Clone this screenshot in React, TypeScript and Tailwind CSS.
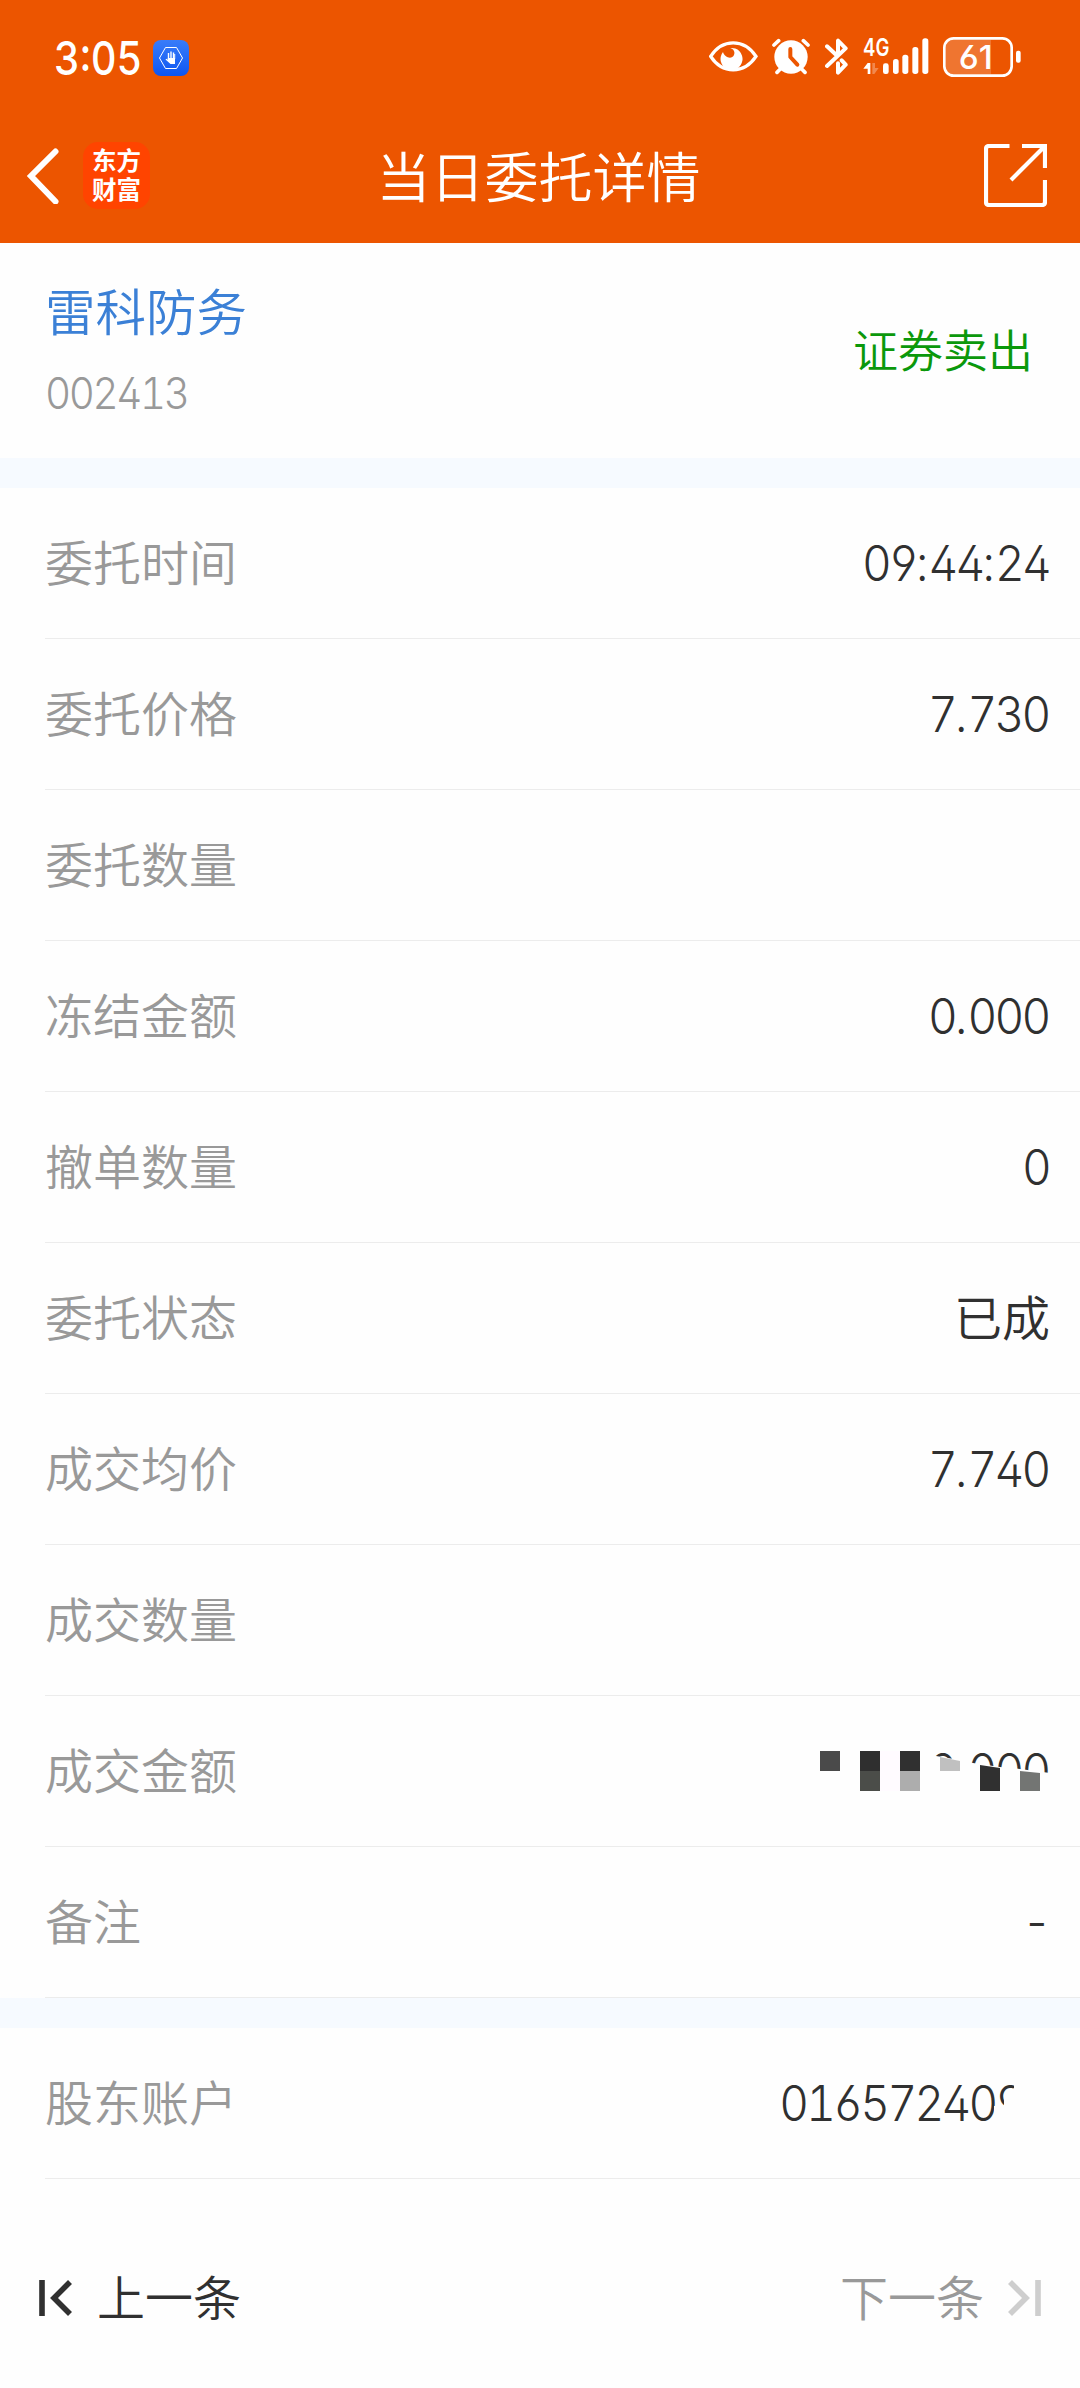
import React from "react";
import clsx from "clsx";

type Row = {
  label: string;
  value?: string;
  kind?: "number" | "text" | "masked" | "account";
};

const orderRows: Row[] = [
  { label: "委托时间", value: "09:44:24" },
  { label: "委托价格", value: "7.730" },
  { label: "委托数量" },
  { label: "冻结金额", value: "0.000" },
  { label: "撤单数量", value: "0" },
  { label: "委托状态", value: "已成", kind: "text" },
  { label: "成交均价", value: "7.740" },
  { label: "成交数量" },
  { label: "成交金额", value: "0.000", kind: "masked" },
  { label: "备注", value: "-" },
];

const digitFont =
  "inline-block whitespace-nowrap font-['Inter',sans-serif] [font-feature-settings:'tnum','cv02','cv03','cv04']";

// digits are set tight, separators keep their own width
function Digits({ value, className }: { value: string; className?: string }) {
  return (
    <span className={clsx(digitFont, className)}>
      {value.split(/([.:])/).map((part, index) => (
        <span
          key={index}
          className={/[.:]/.test(part) ? "tracking-normal" : "tracking-[-0.06em]"}
        >
          {part}
        </span>
      ))}
    </span>
  );
}

function EyeIcon() {
  return (
    <svg width="49" height="33" viewBox="0 0 147 99" fill="none">
      <path
        d="M5 49C40 -5 105 -5 141 49C105 103 40 103 5 49Z"
        stroke="white"
        strokeWidth="10"
      />
      <path
        d="M64 24A33 33 0 1 1 42 36C46 52 68 60 75 45C79 34 73 27 64 24Z"
        fill="white"
      />
    </svg>
  );
}

function AlarmIcon() {
  return (
    <svg width="38" height="37" viewBox="0 0 114 111" fill="none">
      <path
        d="M6 21L20 8M94 8L108 21M15 103L25 93M99 103L89 93"
        stroke="white"
        strokeWidth="11"
        strokeLinecap="round"
      />
      <circle cx="57" cy="57" r="50" fill="white" />
      <path
        d="M55 33V57L76 80"
        stroke="#ec5500"
        strokeWidth="12"
        strokeLinecap="round"
        strokeLinejoin="round"
      />
    </svg>
  );
}

function BluetoothIcon() {
  return (
    <svg width="23" height="37" viewBox="0 0 69 111" fill="none">
      <path
        d="M6 84L62 31L39 8V44M6 25L34 51M50 67L62 80L39 104V76"
        stroke="white"
        strokeWidth="12"
        strokeLinecap="round"
        strokeLinejoin="round"
      />
    </svg>
  );
}

function SignalIcon() {
  return (
    <svg
      className="overflow-visible"
      width="66"
      height="37"
      viewBox="0 0 198 111"
    >
      <text
        x="0"
        y="54"
        fontSize="71"
        fontWeight="600"
        textLength="79"
        lengthAdjust="spacingAndGlyphs"
        fill="white"
        className="font-['Inter',sans-serif]"
      >
        4G
      </text>
      <path d="M1 92L14 75H22V108H14V92Z" fill="white" />
      <path d="M28 75H36V90H47L34 108H28Z" fill="white" opacity="0.3" />
      <rect x="60" y="76" width="17" height="32" rx="7" fill="white" />
      <rect x="90" y="63" width="17" height="45" rx="8" fill="white" />
      <rect x="118" y="50" width="18" height="58" rx="8" fill="white" />
      <rect x="148" y="27" width="18" height="81" rx="8" fill="white" />
      <rect x="178" y="1" width="18" height="107" rx="8" fill="white" />
    </svg>
  );
}

function BatteryIcon() {
  return (
    <svg width="78" height="40" viewBox="0 0 234 120" fill="none">
      <path
        d="M32 8H144V112H32Q8 112 8 88V32Q8 8 32 8Z"
        fill="white"
        opacity="0.19"
      />
      <rect
        x="4"
        y="4"
        width="202"
        height="112"
        rx="28"
        stroke="white"
        strokeWidth="8"
      />
      <rect x="219" y="41" width="14" height="36" rx="6" fill="white" />
      <text
        x="47"
        y="95"
        fontSize="99"
        fontWeight="500"
        textLength="102"
        lengthAdjust="spacingAndGlyphs"
        fill="white"
        className="font-['Inter',sans-serif] [font-feature-settings:'cv03']"
      >
        61
      </text>
    </svg>
  );
}

function HandBadge() {
  return (
    <div className="flex size-9 items-center justify-center rounded-lg bg-linear-to-b from-[#397cf9] to-[#0c55f2]">
      <svg width="36" height="36" viewBox="0 0 36 36" fill="none">
        <path d="M6.5 18L12.5 7.5H23.5L29.5 18L23.5 28.5H12.5Z" stroke="white" />
        <path
          d="M15.5 13V19M18 11.5V19M20.5 12.5V19"
          stroke="white"
          strokeWidth="1.4"
        />
        <path
          d="M14.8 18H22V24H17.5L12.5 19.5L13.5 18.8L14.8 19.8ZM21.2 14H22.2V19H21.2Z"
          fill="white"
        />
      </svg>
    </div>
  );
}

function StatusBar() {
  return (
    <div className="flex h-[116px] items-center justify-between pr-[59px] pl-[54px]">
      <div className="flex items-center">
        <div className="w-[99px] pt-px">
          <span
            className={clsx(
              digitFont,
              "origin-left scale-x-[0.86] text-[46.5px] leading-none font-medium text-white",
            )}
          >
            3:05
          </span>
        </div>
        <HandBadge />
      </div>
      <div className="flex items-center pb-[3px]">
        <EyeIcon />
        <div className="w-[14px]" />
        <AlarmIcon />
        <div className="w-[15px]" />
        <BluetoothIcon />
        <div className="w-[15px]" />
        <SignalIcon />
        <div className="w-[14px]" />
        <BatteryIcon />
      </div>
    </div>
  );
}

function NavBar() {
  return (
    <div className="grid h-[127px] grid-cols-[1fr_auto_1fr] items-start pr-[33px] pl-[26px]">
      <div className="flex items-center gap-[24px] pt-[26px]">
        <svg width="33" height="56" viewBox="0 0 33 56" fill="none">
          <path
            d="M29.5 3.5L5 28L29.5 53.5"
            stroke="white"
            strokeWidth="6"
            strokeLinecap="round"
          />
        </svg>
        <div className="flex h-[67px] w-[67px] flex-col items-center justify-center rounded-[15px] bg-[#ff4400] pb-1 text-[24.5px] leading-[29px] font-bold text-white">
          <span>东方</span>
          <span>财富</span>
        </div>
      </div>
      <h1 className="pt-[19px] pl-1 text-[54px] leading-[80px] font-[350] text-white">
        当日委托详情
      </h1>
      <svg
        className="mt-7 justify-self-end"
        width="63"
        height="63"
        viewBox="0 0 63 63"
        fill="none"
      >
        <path
          d="M25.5 2H5Q2 2 2 5V58Q2 61 5 61H58Q61 61 61 58V36M38 2H61V24M61 2L27 36"
          stroke="white"
          strokeWidth="4.2"
        />
      </svg>
    </div>
  );
}

function Summary() {
  return (
    <section className="flex h-[215px] items-center justify-between pr-[47px] pl-[45px]">
      <div className="flex flex-col">
        <span className="h-[82px] text-[50.5px] leading-[77px] font-[350] text-[#3b80d6]">
          雷科防务
        </span>
        <Digits
          value="002413"
          className="origin-left scale-x-[0.93] pt-[2px] text-[43.5px] leading-[76px] font-[350] text-[#999]"
        />
      </div>
      <span className="pb-1 text-[45px] leading-[60px] font-[350] text-[#0b980b]">
        证券卖出
      </span>
    </section>
  );
}

// mosaic that hides the lower part of the amount
function Mosaic() {
  return (
    <svg
      className="absolute top-0 right-[30px]"
      width="240"
      height="150"
      viewBox="0 0 240 150"
    >
      <path
        d="M120 59L144 63L163 67L190 71L210 73L240 77V110H120Z"
        fill="#fefefe"
      />
      <rect x="10" y="55" width="20" height="20" fill="#4a4a4a" />
      <rect x="50" y="55" width="20" height="20" fill="#2f2f2f" />
      <rect x="50" y="75" width="20" height="20" fill="#4b4d49" />
      <rect x="70" y="55" width="20" height="40" fill="#fffbff" />
      <rect x="90" y="55" width="20" height="20" fill="#303030" />
      <rect x="90" y="75" width="20" height="20" fill="#adadad" />
      <path d="M130 61L150 65V75H130Z" fill="#c0c0c0" />
      <path d="M170 69L190 72V95H170Z" fill="#303030" />
      <path d="M210 75L230 77V95H210Z" fill="#737573" />
    </svg>
  );
}

function DetailRow({ label, value, kind = "number" }: Row) {
  return (
    <div className="relative ml-[45px] flex h-[151px] items-center justify-between border-b border-[#ececec] pr-[30px]">
      <span className="pb-[6px] text-[48px] leading-[72px] font-[350] text-[#999]">
        {label}
      </span>
      {value && kind === "text" && (
        <span className="pb-[6px] text-[48px] leading-[72px] font-[350] text-[#303030]">
          {value}
        </span>
      )}
      {value && kind !== "text" && (
        <Digits
          value={value}
          className={clsx(
            "origin-right scale-x-[0.93] text-[49.5px] leading-[72px] font-[350] text-[#303030]",
            kind === "account" ? "mr-[28px]" : "mr-px",
          )}
        />
      )}
      {kind === "masked" && <Mosaic />}
      {kind === "account" && (
        <svg
          className="absolute top-0 right-0"
          width="100"
          height="150"
          viewBox="0 0 100 150"
        >
          <path d="M34 50H60V110H14V78H24V66L34 60Z" fill="#fefefe" />
        </svg>
      )}
    </div>
  );
}

function Pager() {
  return (
    <footer className="flex h-[209px] items-center justify-between pt-[28px] pr-[39px] pl-[39px]">
      <button className="flex items-center gap-[25px] text-[48px] leading-[72px] font-[350] text-[#303030]">
        <svg width="33" height="36" viewBox="0 0 33 36" fill="none">
          <path d="M3 0V36M31 2L15 18L31 34" stroke="#303030" strokeWidth="5.6" />
        </svg>
        <span className="pb-[6px]">上一条</span>
      </button>
      <button className="flex items-center gap-[24px] text-[48px] leading-[72px] font-[350] text-[#999]">
        <span className="pb-[6px]">下一条</span>
        <svg width="33" height="36" viewBox="0 0 33 36" fill="none">
          <path d="M30 0V36M2 2L18 18L2 34" stroke="#cecece" strokeWidth="5.6" />
        </svg>
      </button>
    </footer>
  );
}

export default function App() {
  return (
    <main className="h-[2388px] w-[1080px] overflow-hidden bg-[#fefefe] font-['Noto_Sans_CJK_SC',sans-serif]">
      <header className="h-[243px] bg-[#ec5500]">
        <StatusBar />
        <NavBar />
      </header>
      <Summary />
      <div className="h-[30px] bg-[#f6faff]" />
      {orderRows.map((row) => (
        <DetailRow key={row.label} {...row} />
      ))}
      <div className="h-[30px] bg-[#f6faff]" />
      <DetailRow label="股东账户" value="016572409" kind="account" />
      <Pager />
    </main>
  );
}
